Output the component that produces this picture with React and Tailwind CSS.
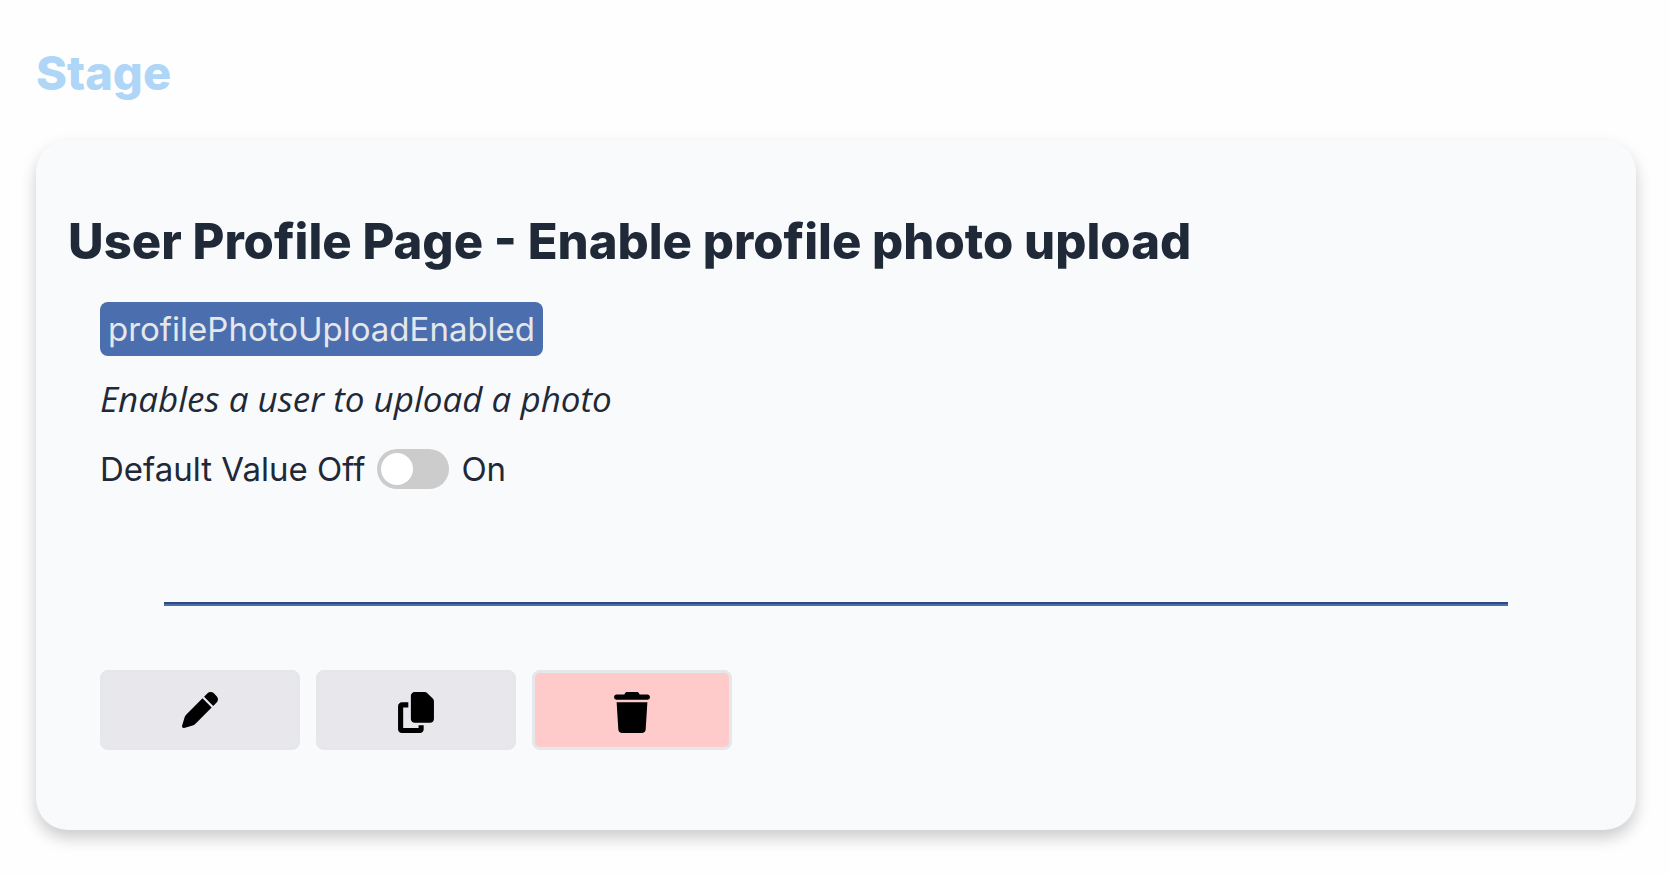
import { useState } from "react";
import { FaCopy, FaPen, FaTrash } from "react-icons/fa6";

const buttonBase =
  "flex h-20 w-[200px] cursor-pointer items-start justify-center rounded-lg border-3 border-[#e5e7eb] pt-[19px] text-black";

function FlagCard({ title, name, description }) {
  const [enabled, setEnabled] = useState(false);

  return (
    <article className="mt-[38px] rounded-[32px] bg-[#f9fafc] px-8 pt-[75px] pb-20 shadow-[0_8px_16px_rgba(0,0,0,0.2)]">
      <h2 className="text-[49px] leading-[54px] font-extrabold">{title}</h2>
      <div className="px-8 pt-[33px]">
        <div className="flex flex-col items-start gap-4 text-[33px] leading-[54px]">
          <code className="rounded-lg bg-[#4b6eaf] px-2 font-[Inter,sans-serif] text-[#e5e7eb]">
            {name}
          </code>
          <p className="font-['Open_Sans',sans-serif] text-[35px] leading-[54px] italic">{description}</p>
          <div className="flex items-center gap-3">
            <label htmlFor="default-value">Default Value Off</label>
            <input
              id="default-value"
              type="checkbox"
              role="switch"
              checked={enabled}
              onChange={(event) => setEnabled(event.target.checked)}
              className="h-10 w-[72px] cursor-pointer appearance-none rounded-full bg-[#ccc] p-1 before:block before:size-8 before:rounded-full before:bg-white checked:bg-[#4b6eaf] checked:before:translate-x-8"
            />
            <span>On</span>
          </div>
        </div>
        <hr className="mx-16 mt-[106px] mb-16 h-1 border-0 border-t-2 border-[#2f4a7c] bg-[#4b6eaf]" />
        <div className="flex gap-4">
          <button type="button" aria-label="Edit" className={`${buttonBase} bg-[#e8e7eb]`}>
            <FaPen className="size-9" />
          </button>
          <button type="button" aria-label="Copy" className={`${buttonBase} bg-[#e8e7eb]`}>
            <FaCopy className="h-[41px] w-9" />
          </button>
          <button type="button" aria-label="Delete" className={`${buttonBase} bg-[#fecaca]`}>
            <FaTrash className="h-[41px] w-9" />
          </button>
        </div>
      </div>
    </article>
  );
}

export default function App() {
  return (
    <main className="min-h-screen bg-[#fefefe] pt-11 pr-[34px] pb-11 pl-9 font-[Inter,sans-serif] text-[#1f2937]">
      <h1 className="text-[47px] leading-[58px] font-extrabold text-[#afd6f6]">Stage</h1>
      <FlagCard
        title="User Profile Page - Enable profile photo upload"
        name="profilePhotoUploadEnabled"
        description="Enables a user to upload a photo"
      />
    </main>
  );
}
